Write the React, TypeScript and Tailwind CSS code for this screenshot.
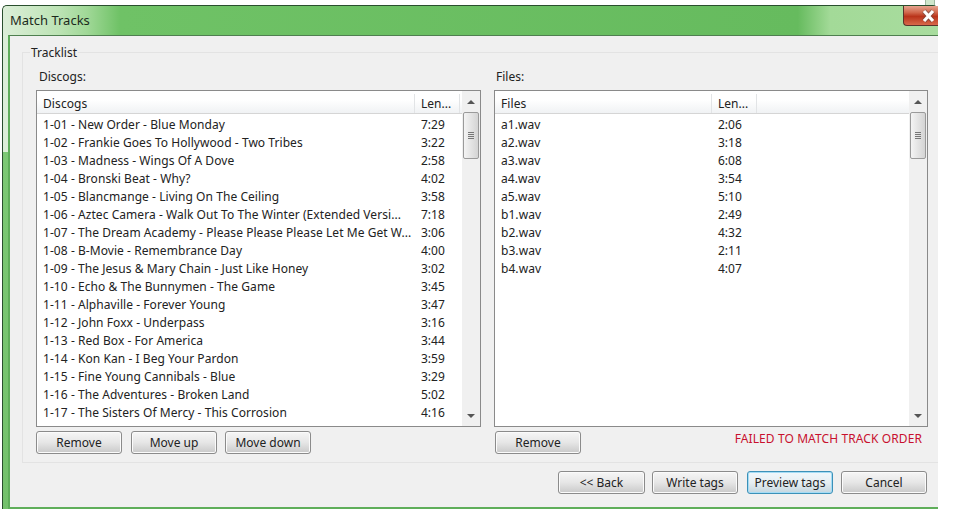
const font = { fontFamily: '"Noto Sans", "Liberation Sans", sans-serif' };

const discogs: [string, string][] = [
  ["1-01 - New Order - Blue Monday", "7:29"],
  ["1-02 - Frankie Goes To Hollywood - Two Tribes", "3:22"],
  ["1-03 - Madness - Wings Of A Dove", "2:58"],
  ["1-04 - Bronski Beat - Why?", "4:02"],
  ["1-05 - Blancmange - Living On The Ceiling", "3:58"],
  ["1-06 - Aztec Camera - Walk Out To The Winter (Extended Versi...", "7:18"],
  ["1-07 - The Dream Academy - Please Please Please Let Me Get W...", "3:06"],
  ["1-08 - B-Movie - Remembrance Day", "4:00"],
  ["1-09 - The Jesus & Mary Chain - Just Like Honey", "3:02"],
  ["1-10 - Echo & The Bunnymen - The Game", "3:45"],
  ["1-11 - Alphaville - Forever Young", "3:47"],
  ["1-12 - John Foxx - Underpass", "3:16"],
  ["1-13 - Red Box - For America", "3:44"],
  ["1-14 - Kon Kan - I Beg Your Pardon", "3:59"],
  ["1-15 - Fine Young Cannibals - Blue", "3:29"],
  ["1-16 - The Adventures - Broken Land", "5:02"],
  ["1-17 - The Sisters Of Mercy - This Corrosion", "4:16"],
];

const files: [string, string][] = [
  ["a1.wav", "2:06"],
  ["a2.wav", "3:18"],
  ["a3.wav", "6:08"],
  ["a4.wav", "3:54"],
  ["a5.wav", "5:10"],
  ["b1.wav", "2:49"],
  ["b2.wav", "4:32"],
  ["b3.wav", "2:11"],
  ["b4.wav", "4:07"],
];

function Btn({ label, focus, wide, className = "" }: { label: string; focus?: boolean; wide?: boolean; className?: string }) {
  return (
    <button
      className={
        "h-[23px] shrink-0 rounded-[3px] border text-[12px] leading-none text-[#222] " +
        (wide ? "w-[87px] " : "w-[86px] ") +
        (focus
          ? "border-[#3c91b8] bg-gradient-to-b from-[#f0f8fc] via-[#e6eef2] to-[#c4d6df] shadow-[inset_0_0_0_1px_#a5dcf5] "
          : "border-[#8b8b8b] bg-gradient-to-b from-[#f6f6f6] via-[#e6e6e6] to-[#c9c9c9] shadow-[inset_0_0_0_1px_#fbfbfb] ") +
        className
      }
    >
      {label}
    </button>
  );
}

function Scrollbar() {
  return (
    <div className="flex w-[18px] shrink-0 flex-col items-center bg-[#f0f0f0]">
      <div className="flex h-[21px] items-center justify-center">
        <div className="h-0 w-0 border-x-[4px] border-b-[4px] border-x-transparent border-b-[#555]" />
      </div>
      <div className="flex h-[47px] w-[16px] flex-col items-center justify-center gap-[1px] rounded-[2px] border border-[#9a9a9a] bg-gradient-to-r from-[#f4f4f4] to-[#d4d4d4]">
        <div className="h-[1px] w-[6px] bg-[#777]" />
        <div className="h-[1px] w-[6px] bg-[#777]" />
        <div className="h-[1px] w-[6px] bg-[#777]" />
        <div className="h-[1px] w-[6px] bg-[#777]" />
      </div>
      <div className="flex-1" />
      <div className="flex h-[21px] items-center justify-center">
        <div className="h-0 w-0 border-x-[4px] border-t-[4px] border-x-transparent border-t-[#555]" />
      </div>
    </div>
  );
}

function ListPanel({
  title,
  rows,
  nameWidth,
  lenWidth,
  filler,
  widthClass,
}: {
  title: string;
  rows: [string, string][];
  nameWidth: string;
  lenWidth: string;
  filler?: boolean;
  widthClass: string;
}) {
  return (
    <div className={"flex h-[337px] shrink-0 border border-[#8a8a8a] bg-white " + widthClass}>
      <div className="flex min-w-0 flex-1 flex-col">
        <div className="flex h-[23px] shrink-0 border-b border-[#d5d5d5] bg-gradient-to-b from-white from-40% to-[#f0f2f4] pt-[3px] text-[12px] text-[#222]">
          <div className={"flex shrink-0 items-center border-r border-[#e2e4e6] pl-[6px] tracking-[0.1px] " + nameWidth}>{title}</div>
          <div className={"flex shrink-0 items-center border-r border-[#e2e4e6] pl-[6px] " + lenWidth}>Len...</div>
          {filler && <div className="flex-1" />}
        </div>
        <div className="pt-[2px] text-[12px] text-[#222]">
          {rows.map(([name, len]) => (
            <div key={name} className="flex h-[18px] items-center">
              <div className={"shrink-0 overflow-hidden whitespace-nowrap pl-[6px] tracking-[0.06px] " + nameWidth}>{name}</div>
              <div className="pl-[6px]">{len}</div>
            </div>
          ))}
        </div>
      </div>
      <Scrollbar />
    </div>
  );
}

export default function App() {
  return (
    <div className="h-[521px] w-[962px] overflow-hidden bg-white pl-[2px] pt-[5px]" style={font}>
      <div className="relative flex h-[504px] w-[936px] flex-col rounded-t-[5px] border-l border-t border-[#2a4f2e] bg-[linear-gradient(180deg,#dcefd8_0px,#dcefd8_146px,#7cc874_146px,#74c16c_100%)]">
        <div className="absolute -top-[6px] right-[3px] h-[5px] w-[10px] border-x border-[#9fb89f] bg-[#cfe6cb]" />
        <div className="flex h-[29px] shrink-0 items-center rounded-tl-[5px] bg-[linear-gradient(90deg,#dceed8_0%,#bce3b4_6%,#a0d897_9%,#6fc266_12.5%,#66bb5e_85%,#a3da98_88.5%,#a8dc9e_100%)] pl-[7px] text-[13px] text-[#1c2a1c]">
          Match Tracks
        </div>
        <div className="absolute right-0 top-0 flex h-[20px] w-[35px] items-center justify-end rounded-bl-[4px] border-b border-l border-[#5a332b] bg-[linear-gradient(180deg,#e6a48f_0%,#d0654a_35%,#b9331a_55%,#d8694a_100%)] pr-[1px]">
          <svg width="17" height="14" viewBox="0 0 17 14">
            <path d="M4 2 L13 12 M13 2 L4 12" stroke="#5b4a46" strokeWidth="5" fill="none" opacity="0.5" />
            <path d="M4 2 L13 12 M13 2 L4 12" stroke="#ffffff" strokeWidth="3.2" fill="none" />
          </svg>
        </div>
        <div className="ml-[5px] flex flex-1 flex-col border-l-2 border-t border-b-2 border-[#5fae5a] border-t-[#4f7f50] bg-[#f0f0f0]">
          <div className="ml-[12px] mt-[16px] flex h-[411px] shrink-0 flex-col border-b border-l border-t border-[#e3e3e3]">
            <div className="-mt-[9px] ml-[7px] w-fit bg-[#f0f0f0] px-[1px] text-[12px] leading-[17px] text-[#222]">Tracklist</div>
            <div className="flex pl-[13px] pr-[9px]">
              <div className="flex w-[458px] shrink-0 flex-col">
                <div className="ml-[3px] mt-[7px] h-[22px] text-[12px] leading-[17px] text-[#222]">Discogs:</div>
                <ListPanel
                  title="Discogs"
                  rows={discogs}
                  nameWidth="w-[378px]"
                  lenWidth="w-[45px]"
                  widthClass="w-[445px]"
                />
                <div className="mt-[4px] flex gap-[9px]">
                  <Btn label="Remove" />
                  <Btn label="Move up" />
                  <Btn label="Move down" className="-ml-[1px]" />
                </div>
              </div>
              <div className="flex w-[434px] shrink-0 flex-col">
                <div className="ml-[2px] mt-[7px] h-[22px] text-[12px] leading-[17px] text-[#222]">Files:</div>
                <ListPanel
                  title="Files"
                  rows={files}
                  nameWidth="w-[217px]"
                  lenWidth="w-[45px]"
                  filler
                  widthClass="w-[434px]"
                />
                <div className="mt-[4px] flex items-center justify-between pl-[1px] pr-[6px]">
                  <Btn label="Remove" />
                  <span className="-translate-y-[4px] text-[12px] tracking-[0.1px] text-[#c8102e]">FAILED TO MATCH TRACK ORDER</span>
                </div>
              </div>
            </div>
          </div>
          <div className="mt-[8px] flex justify-end gap-[7px] pr-[11px]">
            <Btn label="<< Back" wide />
            <Btn label="Write tags" />
            <Btn label="Preview tags" focus className="ml-[2px]" />
            <Btn label="Cancel" className="ml-[1px]" />
          </div>
        </div>
      </div>
    </div>
  );
}
